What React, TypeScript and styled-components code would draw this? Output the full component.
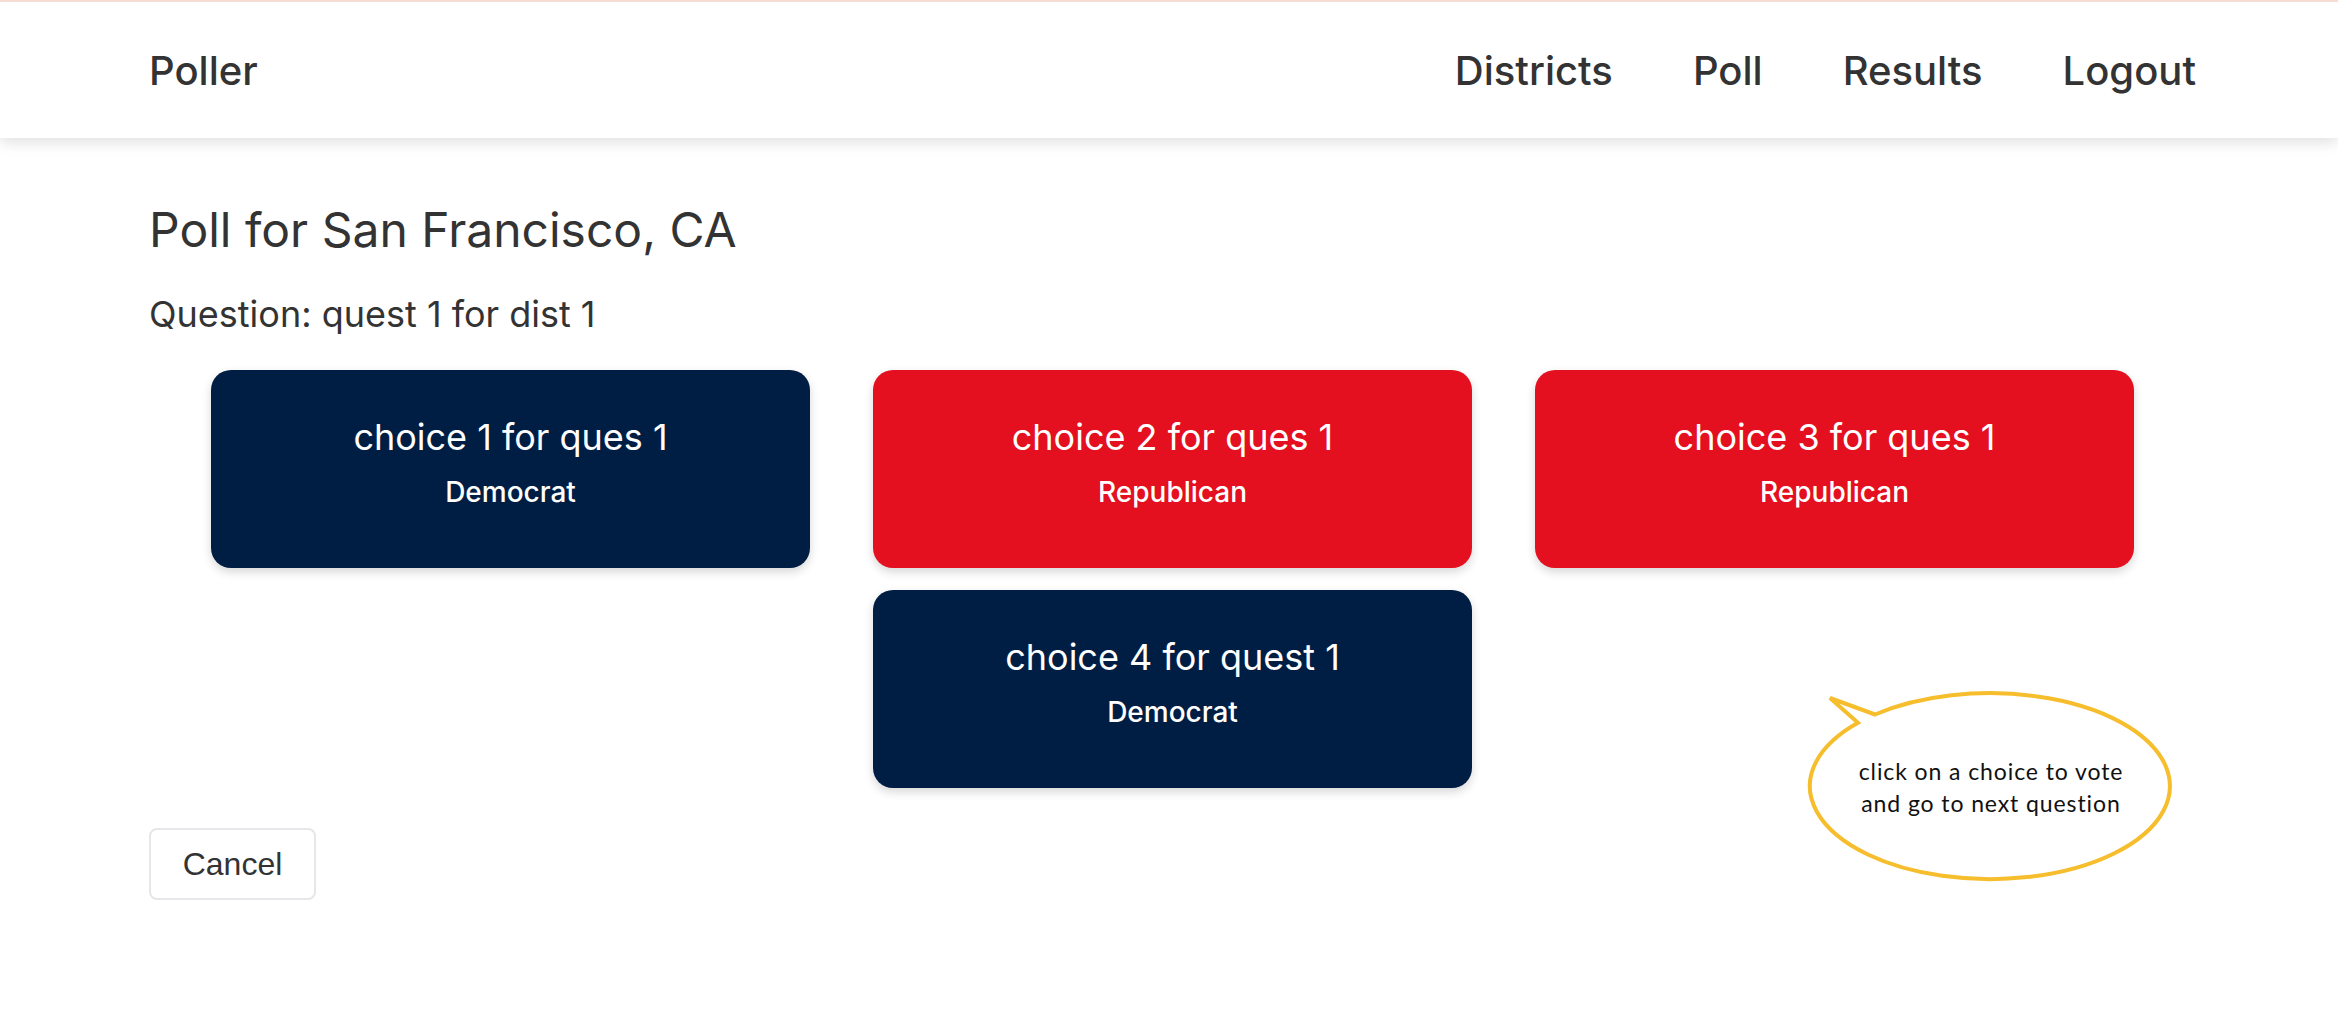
import React from "react";
import styled, { createGlobalStyle } from "styled-components";

const GlobalStyle = createGlobalStyle`
  html, body {
    margin: 0;
    padding: 0;
    background: #ffffff;
  }
  body {
    font-family: Inter, "Noto Sans", sans-serif;
    color: #333333;
  }
  * { box-sizing: border-box; }
`;

const Page = styled.div`
  position: relative;
  min-height: 1030px;
  background: #ffffff;
`;

const NavBar = styled.header`
  height: 138px;
  border-top: 2px solid #f5ddd2;
  background: #ffffff;
  display: flex;
  align-items: center;
  justify-content: space-between;
  padding: 0 142px 0 149px;
  box-shadow: 0 4px 14px rgba(0, 0, 0, 0.13);
  position: relative;
  z-index: 1;
`;

const Brand = styled.a`
  font-size: 40px;
  font-weight: 500;
  color: #333333;
  text-decoration: none;
`;

const NavLinks = styled.nav`
  display: flex;
  gap: 80px;
`;

const NavLink = styled.a`
  font-size: 40px;
  font-weight: 500;
  color: #333333;
  text-decoration: none;
`;

const Main = styled.main`
  padding: 66px 142px 0 149px;
`;

const Title = styled.h2`
  margin: 0;
  font-size: 48px;
  line-height: 52px;
  font-weight: 400;
  color: #333333;
`;

const Question = styled.p`
  margin: 38px 0 0;
  font-size: 36px;
  line-height: 40px;
  font-weight: 400;
  color: #333333;
`;

const Choices = styled.div`
  margin-top: 36px;
  display: flex;
  flex-wrap: wrap;
  justify-content: center;
  column-gap: 63px;
  row-gap: 22px;
`;

const ChoiceCard = styled.button<{ $party: "dem" | "rep" }>`
  width: 599px;
  height: 198px;
  border: none;
  border-radius: 20px;
  padding: 45px 0 0;
  display: flex;
  flex-direction: column;
  align-items: center;
  gap: 15px;
  cursor: pointer;
  background: ${(p) => (p.$party === "dem" ? "#001e44" : "#e40f1f")};
  color: #ffffff;
  box-shadow: 0 4px 10px rgba(0, 0, 0, 0.16);
  font-family: Inter, "Noto Sans", sans-serif;
`;

const ChoiceText = styled.span`
  font-size: 36px;
  line-height: 44px;
  font-weight: 400;
`;

const PartyText = styled.span`
  font-size: 28px;
  line-height: 36px;
  font-weight: 500;
`;

const Actions = styled.div`
  margin-top: 40px;
  display: flex;
`;

const CancelButton = styled.button`
  width: 167px;
  height: 72px;
  background: #ffffff;
  border: 2px solid #e6e6eb;
  border-radius: 8px;
  font-family: "Liberation Sans", Arial, sans-serif;
  font-size: 32px;
  color: #333333;
  cursor: pointer;
`;

const Bubble = styled.div`
  position: absolute;
  left: 1806px;
  top: 686px;
  width: 370px;
  height: 200px;
  display: flex;
  align-items: center;
  justify-content: center;
`;

const BubbleShape = styled.svg`
  position: absolute;
  inset: 0;
`;

const BubbleText = styled.div`
  position: relative;
  margin-top: 2px;
  font-family: Lato, "Noto Sans", sans-serif;
  font-size: 23px;
  line-height: 32px;
  letter-spacing: 0.9px;
  color: #111111;
  text-align: center;
`;

const choices: { text: string; party: "dem" | "rep"; label: string }[] = [
  { text: "choice 1 for ques 1", party: "dem", label: "Democrat" },
  { text: "choice 2 for ques 1", party: "rep", label: "Republican" },
  { text: "choice 3 for ques 1", party: "rep", label: "Republican" },
  { text: "choice 4 for quest 1", party: "dem", label: "Democrat" },
];

export default function App() {
  return (
    <Page>
      <GlobalStyle />
      <NavBar>
        <Brand>Poller</Brand>
        <NavLinks>
          <NavLink>Districts</NavLink>
          <NavLink>Poll</NavLink>
          <NavLink>Results</NavLink>
          <NavLink>Logout</NavLink>
        </NavLinks>
      </NavBar>
      <Main>
        <Title>Poll for San Francisco, CA</Title>
        <Question>Question: quest 1 for dist 1</Question>
        <Choices>
          {choices.map((c) => (
            <ChoiceCard key={c.text} $party={c.party}>
              <ChoiceText>{c.text}</ChoiceText>
              <PartyText>{c.label}</PartyText>
            </ChoiceCard>
          ))}
        </Choices>
        <Actions>
          <CancelButton>Cancel</CancelButton>
        </Actions>
      </Main>
      <Bubble>
        <BubbleShape width="370" height="200" viewBox="0 0 370 200">
          <path
            d="M 69 28.5 A 180 93 0 1 1 52 36.8 L 24 12 Z"
            fill="#ffffff"
            stroke="#f6bd2c"
            strokeWidth="4"
            strokeLinejoin="miter"
          />
        </BubbleShape>
        <BubbleText>
          click on a choice to vote
          <br />
          and go to next question
        </BubbleText>
      </Bubble>
    </Page>
  );
}
